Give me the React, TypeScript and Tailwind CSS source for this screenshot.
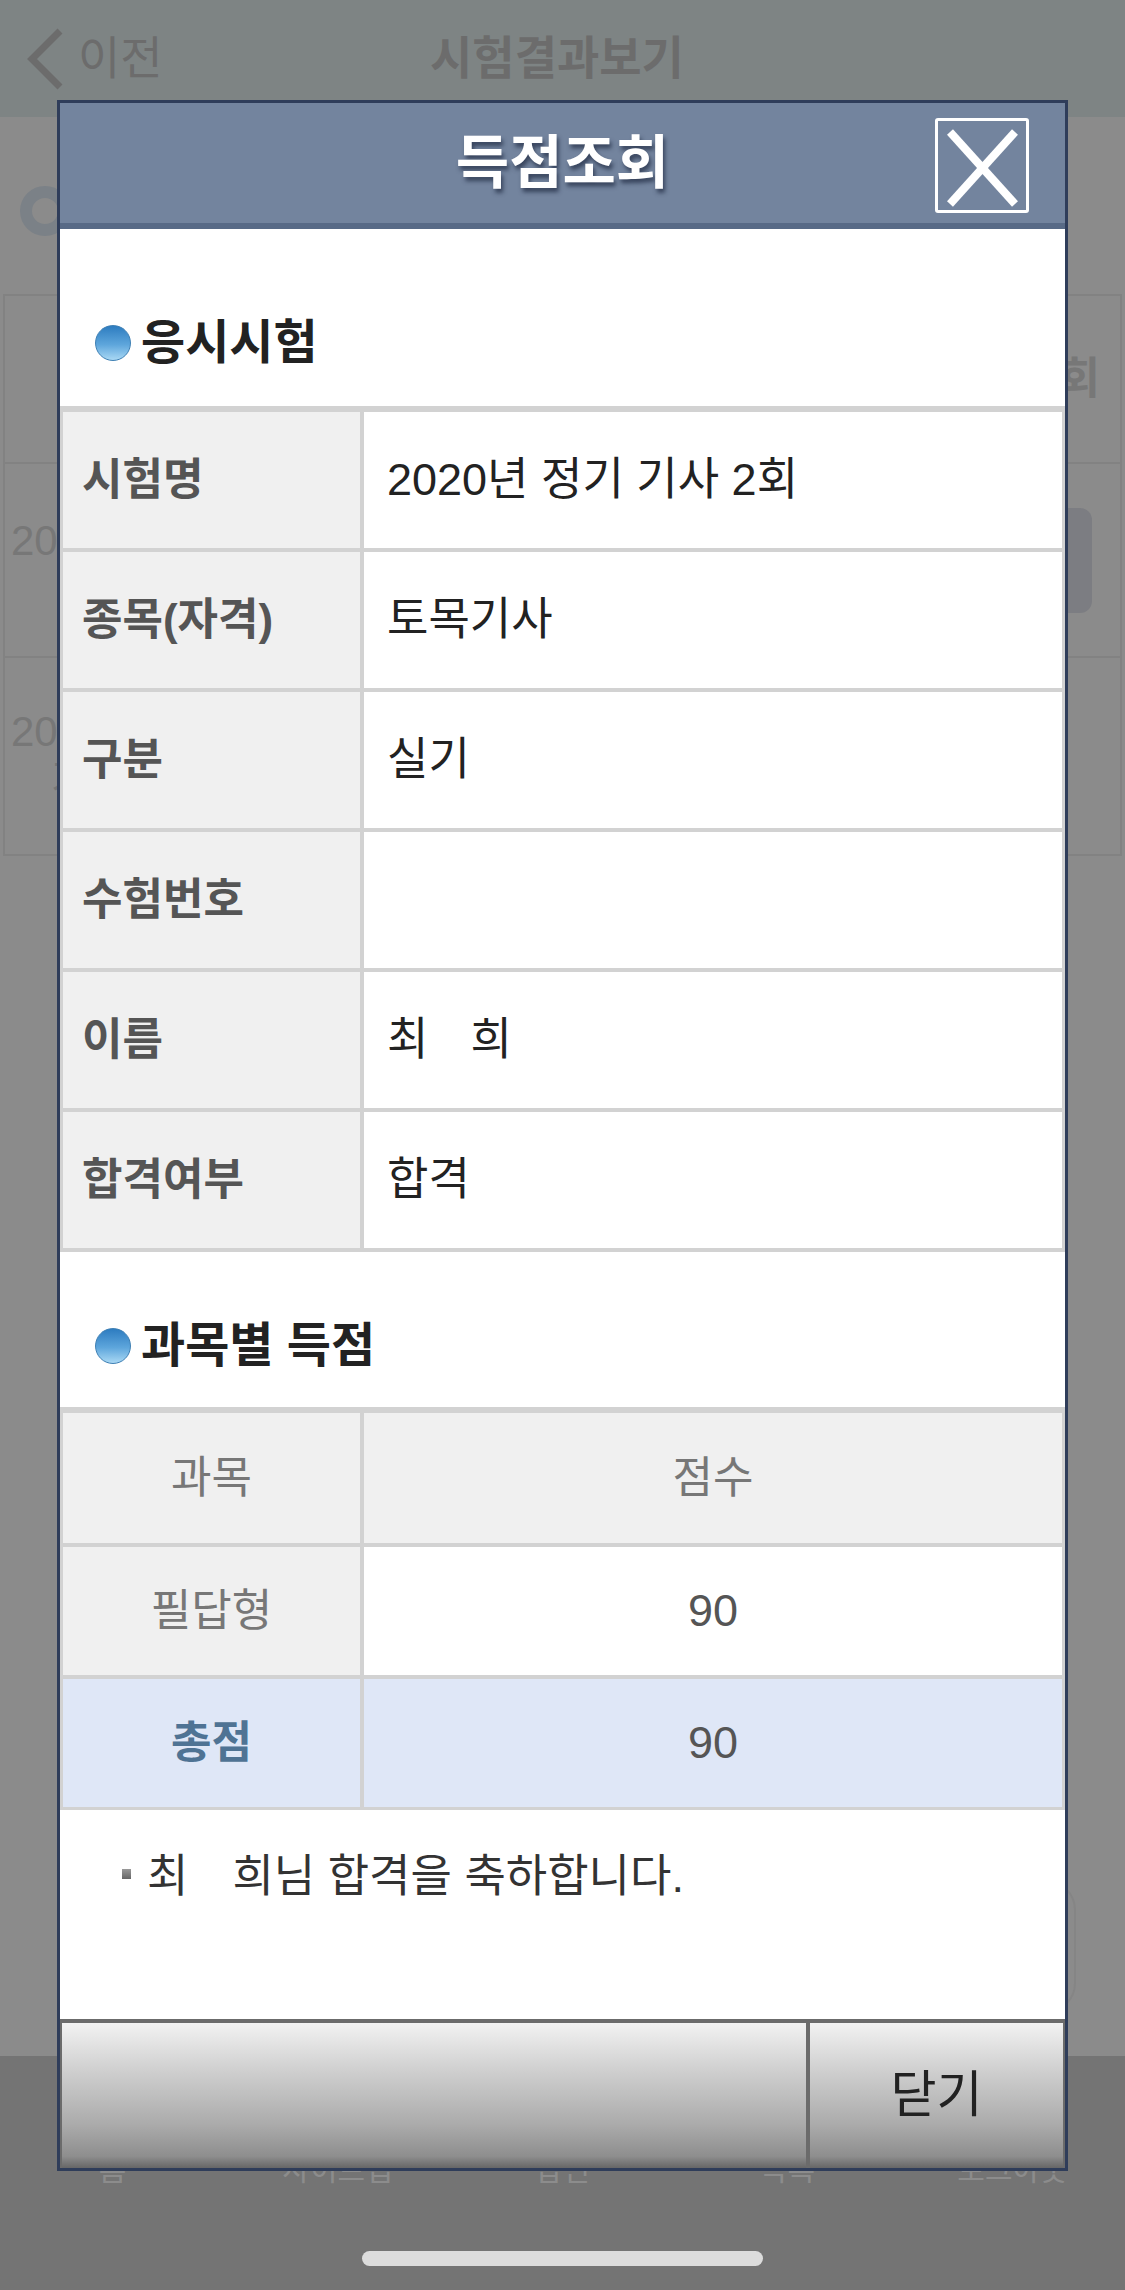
import React from 'react';

const rows: { label: string; value: React.ReactNode }[] = [
  { label: '시험명', value: '2020년 정기 기사 2회' },
  { label: '종목(자격)', value: '토목기사' },
  { label: '구분', value: '실기' },
  { label: '수험번호', value: '' },
  {
    label: '이름',
    value: (
      <>
        최<span className="inline-block w-[42px]" />희
      </>
    ),
  },
  { label: '합격여부', value: '합격' },
];

const tabs = ['홈', '사이트맵', '답변', '목록', '로그아웃'];

function SectionTitle({ title, className }: { title: string; className: string }) {
  return (
    <div className={`flex items-center gap-[10px] pl-[35px] ${className}`}>
      <span className="h-[36px] w-[36px] rounded-full border border-[#3d7fb4] bg-[linear-gradient(to_bottom,#2d7cc0_0%,#5ea6dc_55%,#a9d8f4_100%)]" />
      <h2 className="text-[48px] font-bold leading-[48px] text-[#222]">{title}</h2>
    </div>
  );
}

function BackgroundPage() {
  return (
    <div className="flex h-full flex-col">
      <header className="flex h-[117px] items-center bg-[#7e8484]">
        <div className="flex w-[330px] items-center pl-[24px]">
          <svg width="42" height="64" viewBox="0 0 42 64" className="mr-[12px]">
            <polyline points="36,4 8,32 36,60" fill="none" stroke="#6c6c6c" strokeWidth="7" />
          </svg>
          <span className="text-[46px] text-[#6c6c6c]">이전</span>
        </div>
        <h1 className="ml-[100px] text-[46px] font-bold text-[#6c6c6c]">시험결과보기</h1>
      </header>

      <main className="flex-1 px-[3px]">
        <div className="ml-[17px] mt-[69px] h-[50px] w-[50px] rounded-full border-[12px] border-[#7b8187] bg-[#8b8b8b]" />
        <div className="mt-[58px] border-2 border-[#828282]">
          <div className="flex h-[168px] items-center justify-end border-b-2 border-[#828282] pr-[20px] text-[44px] font-bold text-[#777]">
            회
          </div>
          <div className="flex h-[194px] items-center justify-between border-b-2 border-[#828282] pl-[6px] pr-[28px] text-[42px] text-[#777]">
            <span className="-mt-[40px]">20</span>
            <span className="h-[105px] w-[30px] rounded-r-[12px] bg-[#7c7d82]" />
          </div>
          <div className="flex h-[196px] flex-col justify-center pl-[6px] text-[42px] leading-[48px] text-[#777]">
            <span>20</span>
            <span className="pl-[40px]">가</span>
          </div>
        </div>
      </main>

      <nav className="relative h-[234px] bg-[#747474]">
        <ul className="grid grid-cols-5 pt-[96px] text-center text-[30px] leading-[36px] text-[#8c8c8c]">
          {tabs.map((t) => (
            <li key={t}>{t}</li>
          ))}
        </ul>
        <div className="absolute bottom-[24px] left-[362px] h-[15px] w-[401px] rounded-full bg-[#dcdcdc]" />
      </nav>

      <div className="absolute right-[49px] top-[1880px] h-[133px] w-[130px] rounded-[30px] border-2 border-[#858585]" />
    </div>
  );
}

export default function App() {
  return (
    <div className="relative h-[2290px] w-[1125px] overflow-hidden bg-[#8b8b8b] font-['Liberation_Sans','Noto_Sans_CJK_KR',sans-serif]">
      <BackgroundPage />

      <div className="absolute left-[57px] top-[100px] w-[1011px] border-[3px] border-[#2f3d5a] bg-white">
        <div className="relative flex h-[126px] items-center justify-center border-b-[6px] border-[#586a86] bg-[#73849e]">
          <h1 className="text-[58px] font-bold leading-none text-white [text-shadow:2px_4px_4px_rgba(35,45,70,0.75)]">
            득점조회
          </h1>
          <button className="absolute right-[36px] top-[15px] h-[95px] w-[94px] rounded-[3px] border-[3px] border-white">
            <svg width="88" height="89" viewBox="0 0 88 89">
              <line x1="12" y1="11" x2="77" y2="83" stroke="white" strokeWidth="8" />
              <line x1="77" y1="11" x2="12" y2="83" stroke="white" strokeWidth="8" />
            </svg>
          </button>
        </div>

        <SectionTitle title="응시시험" className="pt-[90px] pb-[39px]" />

        <div className="grid grid-cols-[297px_698px] gap-[4px] bg-[#d2d2d2] px-[3px] pb-[4px] pt-[6px]">
          {rows.map((r) => (
            <React.Fragment key={r.label}>
              <div className="flex h-[136px] items-center bg-[#f0f0f0] pl-[19px] text-[44px] font-bold text-[#555]">
                {r.label}
              </div>
              <div className="flex h-[136px] items-center bg-white pl-[23px] text-[45px] text-[#222]">{r.value}</div>
            </React.Fragment>
          ))}
        </div>

        <SectionTitle title="과목별 득점" className="pt-[70px] pb-[37px]" />

        <div className="grid grid-cols-[297px_698px] gap-[4px] bg-[#d2d2d2] px-[3px] pb-[3px] pt-[6px] text-center">
          <div className="flex h-[130px] items-center justify-center bg-[#f0f0f0] text-[44px] text-[#777]">과목</div>
          <div className="flex h-[130px] items-center justify-center bg-[#f0f0f0] text-[44px] text-[#777]">점수</div>
          <div className="flex h-[128px] items-center justify-center bg-[#f0f0f0] text-[44px] text-[#777]">필답형</div>
          <div className="flex h-[128px] items-center justify-center bg-white text-[45px] text-[#555]">90</div>
          <div className="flex h-[128px] items-center justify-center bg-[#dfe7f7] text-[44px] font-bold text-[#4f7394]">총점</div>
          <div className="flex h-[128px] items-center justify-center bg-[#dfe7f7] text-[45px] text-[#555]">90</div>
        </div>

        <div className="flex h-[209px] items-start gap-[16px] pl-[62px] pt-[41px]">
          <span className="mt-[18px] h-[10px] w-[9px] bg-[linear-gradient(to_bottom,#999,#666)]" />
          <p className="text-[45px] leading-[52px] text-[#333]">
            최<span className="inline-block w-[44px]" />희님 합격을 축하합니다.
          </p>
        </div>

        <div className="flex h-[149px] gap-[4px] border-t-4 border-[#6b6b6b] bg-[#6b6b6b] px-[2px]">
          <button className="h-full w-[744px] bg-[linear-gradient(to_bottom,#f2f2f2_0%,#d2d2d2_30%,#ababab_70%,#8e8e8e_92%,#666_100%)]" />
          <button className="h-full flex-1 bg-[linear-gradient(to_bottom,#f2f2f2_0%,#d2d2d2_30%,#ababab_70%,#8e8e8e_92%,#666_100%)] text-[50px] text-[#222]">
            닫기
          </button>
        </div>
      </div>
    </div>
  );
}
